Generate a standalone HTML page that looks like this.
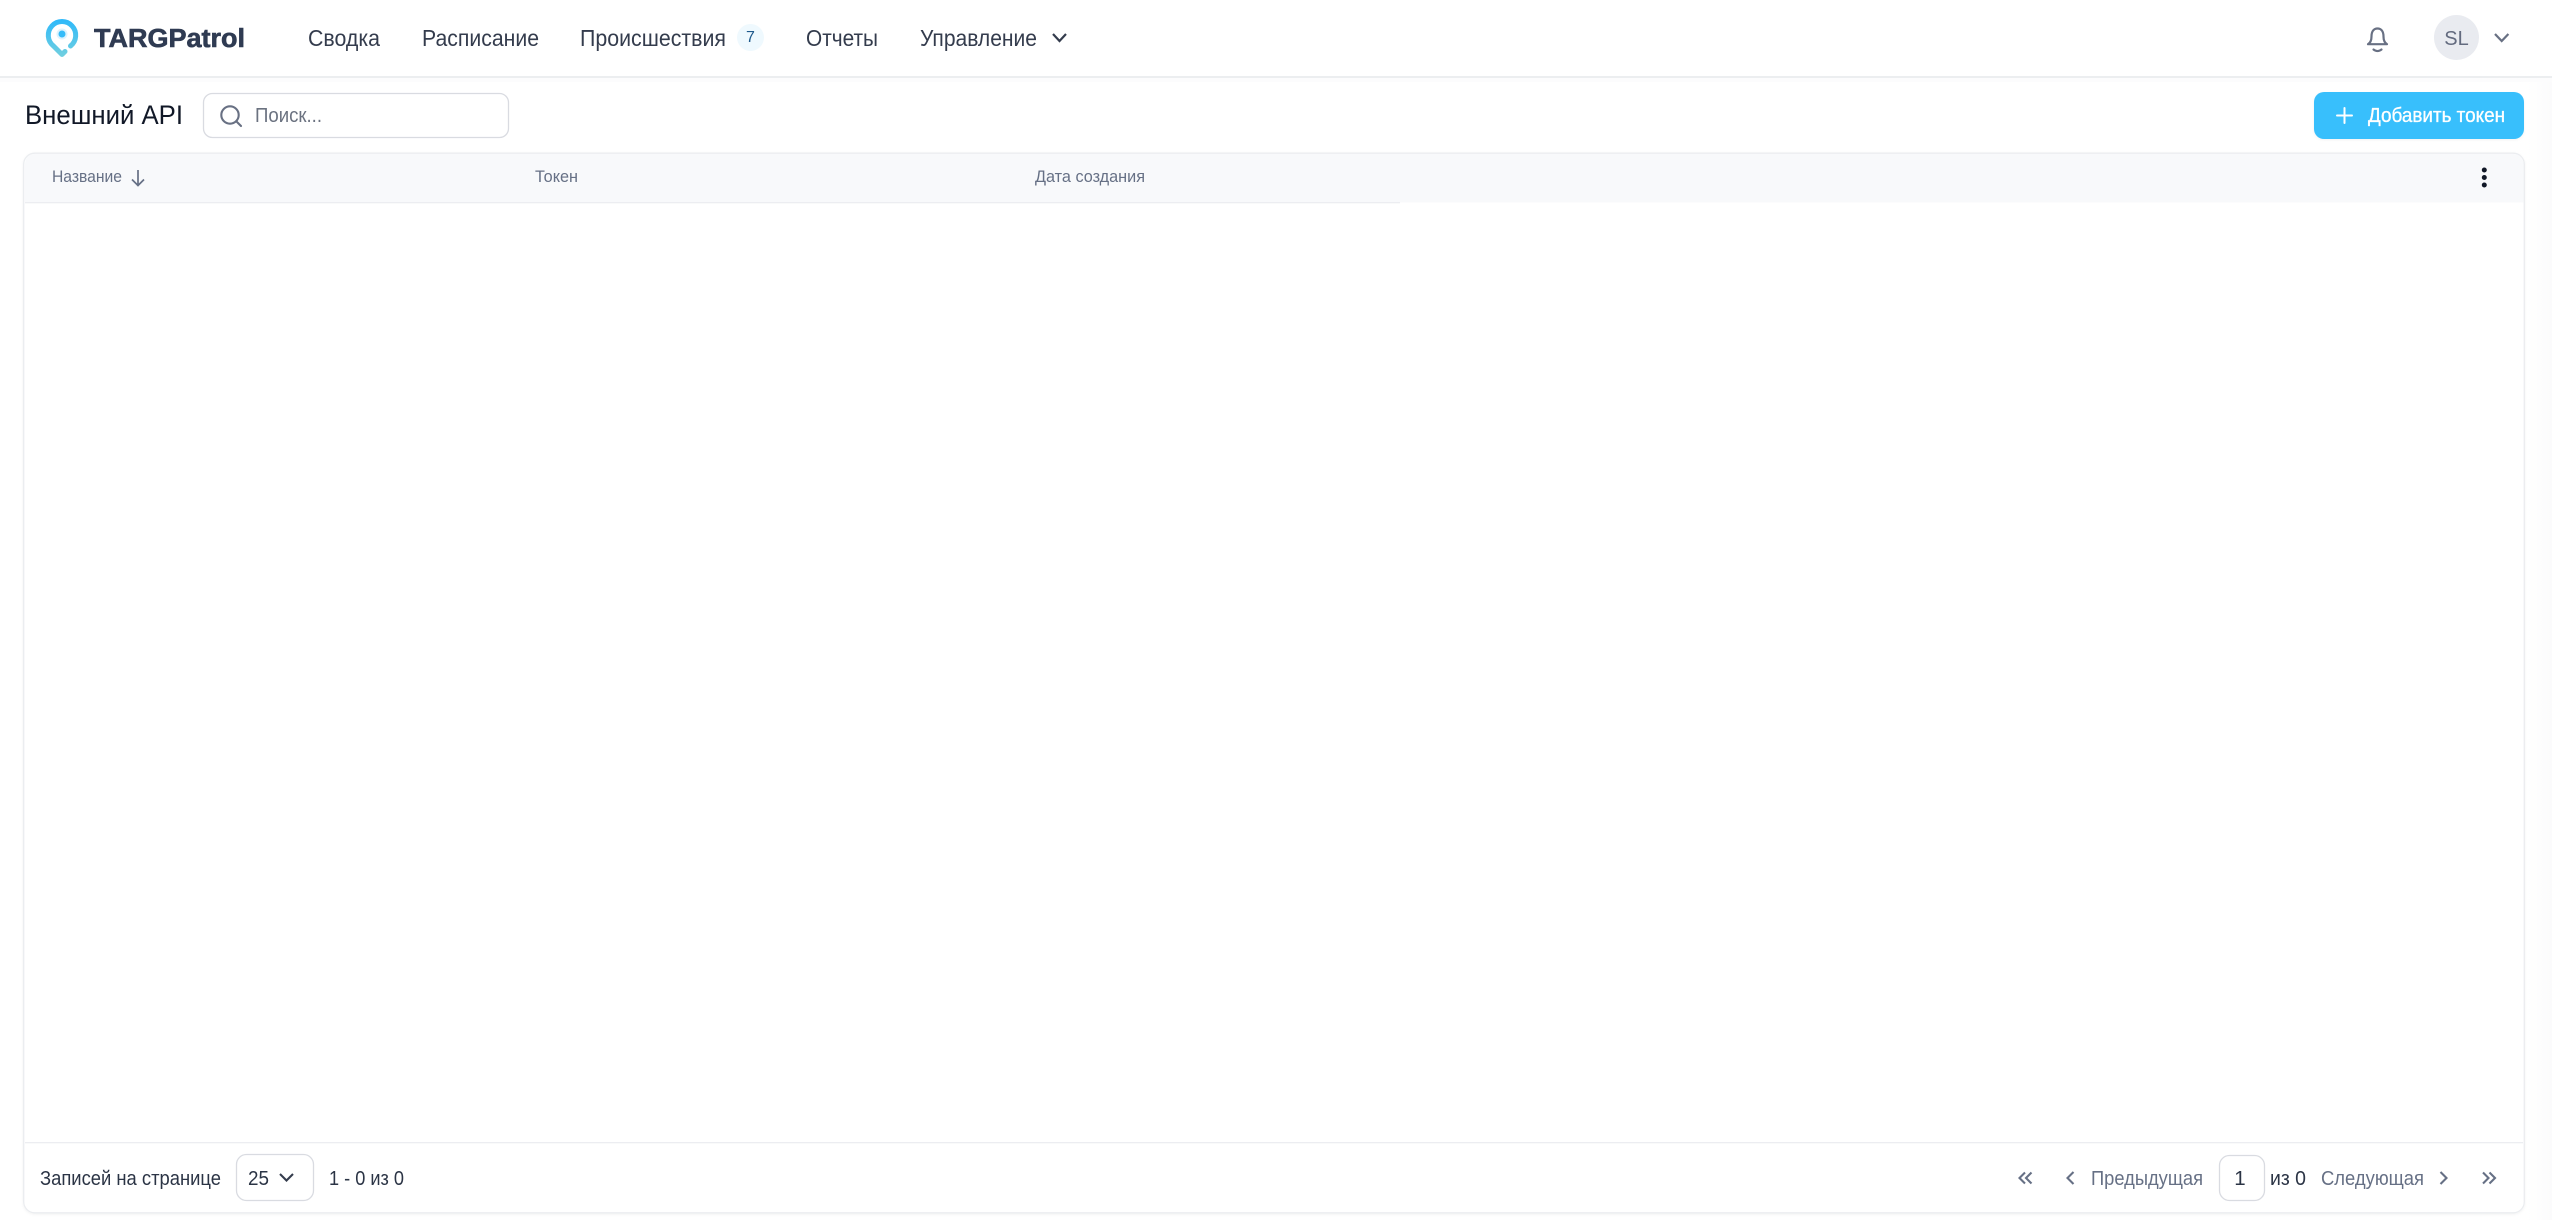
<!DOCTYPE html>
<html><head><meta charset="utf-8"><title>Внешний API</title>
<style>
html,body{margin:0;padding:0;background:#fff;width:2552px;height:1220px;overflow:hidden}
svg{display:block;position:absolute;left:0;top:0;filter:blur(.3px)}
text{font-family:"Liberation Sans",sans-serif}
</style></head><body>
<svg width="2552" height="1220" viewBox="0 0 2552 1220" xmlns="http://www.w3.org/2000/svg">
<defs>
<linearGradient id="lg" gradientUnits="userSpaceOnUse" x1="62" y1="18" x2="62" y2="57"><stop offset="0" stop-color="#2bb8fb"/><stop offset="1" stop-color="#72d0df"/></linearGradient>
<linearGradient id="edge" x1="0" y1="0" x2="1" y2="0"><stop offset="0" stop-color="#ffffff"/><stop offset="1" stop-color="#fbfbfc"/></linearGradient>
<filter id="sh" x="-5%" y="-5%" width="110%" height="120%"><feDropShadow dx="0" dy="1" stdDeviation="1.2" flood-color="#000" flood-opacity=".05"/></filter>
</defs>
<rect x="0" y="0" width="2552" height="1220" fill="#fff"/>
<rect x="2527" y="78" width="25" height="1142" fill="url(#edge)"/>
<rect x="0" y="77" width="2552" height="5" fill="#fcfcfd"/>
<rect x="0" y="76" width="2552" height="2" fill="#eceef0"/>

<!-- logo -->
<path d="M70.5 46A13.7 13.7 0 1 0 53.5 46L62 54.5L65 51.5" fill="none" stroke="url(#lg)" stroke-width="5" stroke-linecap="round" stroke-linejoin="round"/>
<circle cx="62" cy="34" r="5.5" fill="#dcf3fe"/><circle cx="62" cy="34" r="3.5" fill="#35bcf9"/>
<text x="94" y="47" font-size="25.5" font-weight="700" fill="#2f3b52" stroke="#2f3b52" stroke-width=".6" textLength="151" lengthAdjust="spacingAndGlyphs">TARGPatrol</text>

<!-- nav -->
<g font-size="23.5" fill="#343c4d">
<text x="308" y="46" textLength="72" lengthAdjust="spacingAndGlyphs">Сводка</text>
<text x="422" y="46" textLength="117" lengthAdjust="spacingAndGlyphs">Расписание</text>
<text x="580" y="46" textLength="146" lengthAdjust="spacingAndGlyphs">Происшествия</text>
<text x="806" y="46" textLength="72" lengthAdjust="spacingAndGlyphs">Отчеты</text>
<text x="920" y="46" textLength="117" lengthAdjust="spacingAndGlyphs">Управление</text>
</g>
<rect x="737" y="24" width="27" height="27" rx="13.5" fill="#eff9fe"/>
<text x="750.5" y="42" font-size="16" fill="#1f5a8c" text-anchor="middle">7</text>
<path d="M1053 34L1059.5 41L1066 34" fill="none" stroke="#343c4d" stroke-width="2.2"/>

<!-- bell -->
<path d="M2368 44.2C2371 42.5 2371.5 39.5 2371.5 36.5C2371.5 31 2374 28.5 2377.5 28.5C2381 28.5 2383.5 31 2383.5 36.5C2383.5 39.5 2384 42.5 2387 44.2Z" fill="none" stroke="#687083" stroke-width="2.2" stroke-linejoin="round"/>
<path d="M2373.5 49.5C2376 51.5 2379 51.5 2381.5 49.5" fill="none" stroke="#687083" stroke-width="2.2" stroke-linecap="round"/>
<circle cx="2456.5" cy="37.5" r="22.5" fill="#e9ebf0"/>
<text x="2456.5" y="45" font-size="20" fill="#636b7f" text-anchor="middle">SL</text>
<path d="M2495 34L2501.7 41L2508.4 34" fill="none" stroke="#687083" stroke-width="2.2"/>

<!-- title + search -->
<text x="25" y="124" font-size="26.5" fill="#111827" textLength="158" lengthAdjust="spacingAndGlyphs">Внешний API</text>
<rect x="203.5" y="93.5" width="305" height="44" rx="9" fill="#fff" stroke="#d9dbe1" stroke-width="1.3"/>
<circle cx="230" cy="115" r="8.7" fill="none" stroke="#687083" stroke-width="2.1"/>
<path d="M236.5 121.5L241 126" stroke="#687083" stroke-width="2.1" stroke-linecap="round"/>
<text x="255" y="122" font-size="20.5" fill="#6b7280" textLength="67" lengthAdjust="spacingAndGlyphs">Поиск...</text>

<!-- add button -->
<rect x="2314" y="92" width="210" height="47" rx="10" fill="#38bffc" filter="url(#sh)"/>
<path d="M2344.5 108V123M2337 115.5H2352" stroke="#fff" stroke-width="2" stroke-linecap="round"/>
<text x="2368" y="122" font-size="20.5" fill="#fff" stroke="#fff" stroke-width=".35" textLength="137" lengthAdjust="spacingAndGlyphs">Добавить токен</text>

<!-- table -->
<rect x="23.7" y="153.2" width="2500.6" height="1059.6" rx="11" fill="#fff" stroke="#ebedf0" stroke-width="1.3" filter="url(#sh)"/>
<path d="M25 202.5V165Q25 154 36 154H2512Q2523.5 154 2523.5 165V202.5Z" fill="#f8f9fb"/>
<rect x="25" y="202" width="1375" height="1.3" fill="#ecedf1"/>
<g font-size="16.5" fill="#667085">
<text x="52" y="182" textLength="70" lengthAdjust="spacingAndGlyphs">Название</text>
<text x="535" y="182" textLength="43" lengthAdjust="spacingAndGlyphs">Токен</text>
<text x="1035" y="182" textLength="110" lengthAdjust="spacingAndGlyphs">Дата создания</text>
</g>
<path d="M138 170V185M132 179.5L138 185.5L144 179.5" fill="none" stroke="#667085" stroke-width="1.7"/>
<circle cx="2484.3" cy="170" r="2.5" fill="#111827"/><circle cx="2484.3" cy="177.5" r="2.5" fill="#111827"/><circle cx="2484.3" cy="185" r="2.5" fill="#111827"/>

<!-- footer -->
<rect x="25" y="1142" width="2498" height="1.3" fill="#ecedf1"/>
<g font-size="20.5" fill="#2b3445">
<text x="40" y="1185" textLength="181" lengthAdjust="spacingAndGlyphs">Записей на странице</text>
<text x="248" y="1185" textLength="21" lengthAdjust="spacingAndGlyphs">25</text>
<text x="329" y="1185" textLength="75" lengthAdjust="spacingAndGlyphs">1 - 0 из 0</text>
<text x="2240" y="1185" text-anchor="middle">1</text>
<text x="2270" y="1185" textLength="36" lengthAdjust="spacingAndGlyphs">из 0</text>
</g>
<rect x="236.5" y="1154.5" width="77" height="46" rx="10" fill="none" stroke="#d9dbe1" stroke-width="1.3"/>
<path d="M280 1174L286.5 1180.5L293 1174" fill="none" stroke="#343c4d" stroke-width="2.1"/>
<rect x="2219.5" y="1155.5" width="45" height="45" rx="10" fill="none" stroke="#d9dbe1" stroke-width="1.3"/>
<g font-size="20.5" fill="#667085">
<text x="2091" y="1185" textLength="112" lengthAdjust="spacingAndGlyphs">Предыдущая</text>
<text x="2321" y="1185" textLength="103" lengthAdjust="spacingAndGlyphs">Следующая</text>
</g>
<g fill="none" stroke="#667085" stroke-width="2.1">
<path d="M2025 1172.5L2019.5 1178L2025 1183.5M2031.5 1172.5L2026 1178L2031.5 1183.5"/>
<path d="M2073.5 1172L2067.5 1178L2073.5 1184"/>
<path d="M2440.5 1172L2446.5 1178L2440.5 1184"/>
<path d="M2483 1172.5L2488.5 1178L2483 1183.5M2489.5 1172.5L2495 1178L2489.5 1183.5"/>
</g>
</svg>
</body></html>
